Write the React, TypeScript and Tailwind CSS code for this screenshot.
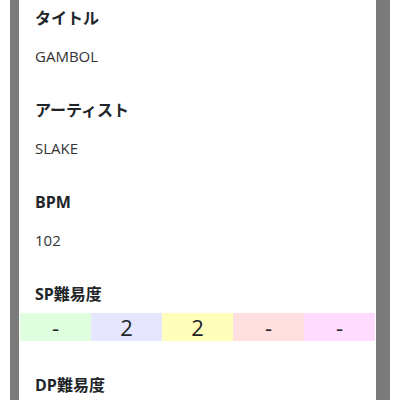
import React from 'react';

const font = { fontFamily: '"Open Sans", "Noto Sans CJK JP", sans-serif' };

const sp = [
  { v: '-', bg: 'bg-[#dfffdf]' },
  { v: '2', bg: 'bg-[#e6e6ff]' },
  { v: '2', bg: 'bg-[#ffffbb]' },
  { v: '-', bg: 'bg-[#ffdfdf]' },
  { v: '-', bg: 'bg-[#ffdcff]' },
];

const Field: React.FC<{ label: string; value: string }> = ({ label, value }) => (
  <div className="mb-8">
    <h3 className="text-[16px] leading-6 font-bold text-[#212529]">{label}</h3>
    <p className="mt-4 text-[15px] leading-5 text-[#333]">{value}</p>
  </div>
);

export default function App() {
  return (
    <div className="w-[400px] h-[400px] overflow-hidden bg-white pl-[10px]" style={font}>
      <div className="w-[380px] min-h-[400px] border-l-[9px] border-r-[14px] border-[#7a7a7a] bg-white pt-[6px]">
        <div className="px-4">
          <Field label="タイトル" value="GAMBOL" />
          <Field label="アーティスト" value="SLAKE" />
          <Field label="BPM" value="102" />
          <h3 className="text-[16px] leading-6 font-bold text-[#212529]">SP難易度</h3>
        </div>
        <div className="mx-px mt-[7px] mb-8 grid grid-cols-5">
          {sp.map((c, i) => (
            <div key={i} className={`${c.bg} h-[28px] flex items-center justify-center text-[22px] text-[#212529]`}>
              {c.v}
            </div>
          ))}
        </div>
        <div className="px-4">
          <h3 className="text-[16px] leading-6 font-bold text-[#212529]">DP難易度</h3>
        </div>
      </div>
    </div>
  );
}
